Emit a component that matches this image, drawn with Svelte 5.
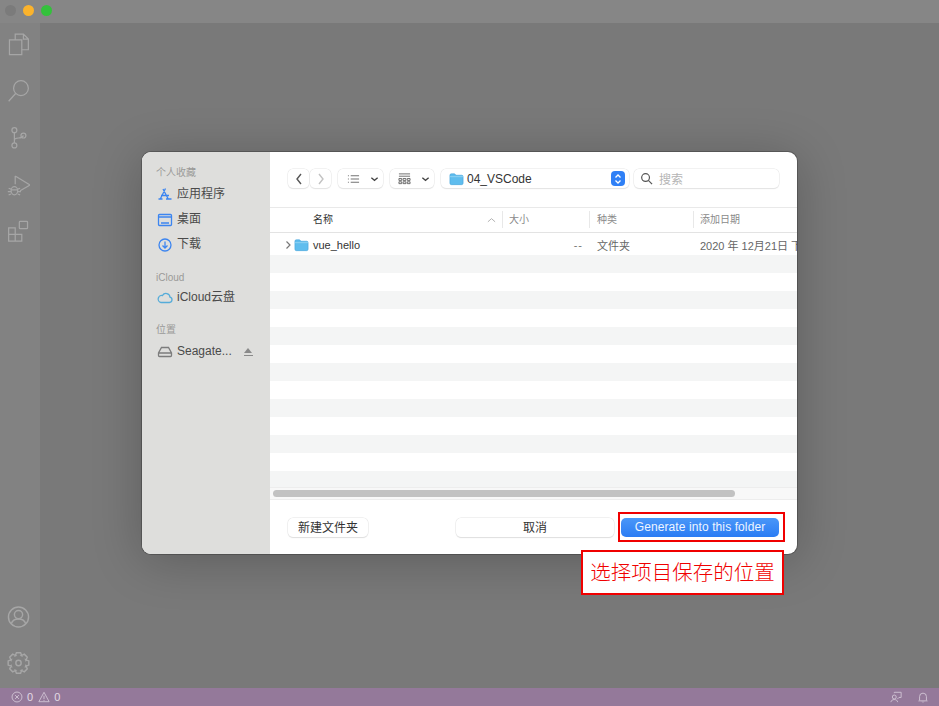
<script lang="ts">
	const stripes = Array.from({ length: 13 }, (_, i) => i);

	// eight toothed gear outline, centred on 12,12
	function gearPath(): string {
		const points: string[] = [];
		for (let i = 0; i < 8; i++) {
			const a = (i * Math.PI) / 4 - Math.PI / 2;
			for (const [r, d] of [[8.2, -0.42], [11, -0.2], [11, 0.2], [8.2, 0.42]]) {
				const x = 12 + r * Math.cos(a + d);
				const y = 12 + r * Math.sin(a + d);
				points.push(`${x.toFixed(2)} ${y.toFixed(2)}`);
			}
		}
		return `M${points.join('L')}z`;
	}
	const gear = gearPath();
</script>

<div class="window">
	<header class="titlebar">
		<span class="light gray"></span>
		<span class="light yellow"></span>
		<span class="light green"></span>
	</header>

	<div class="body">
		<nav class="activity">
			<div class="group">
				<svg viewBox="0 0 28 28" class="act"><path d="M10 9V2h10l6 6v13h-8M20 2v6h6M3 9h15v18H3z" /></svg>
				<svg viewBox="0 0 28 28" class="act"><circle cx="17" cy="10.500" r="9" /><path d="M10.500 17 2 26.500" /></svg>
				<svg viewBox="0 0 28 28" class="act"><circle cx="9" cy="4.500" r="3" /><circle cx="9" cy="23" r="3" /><circle cx="20" cy="11" r="3" /><path d="M9 7.500V20M9 17c0-2.500 2-3 5-3s5-.5 6-3" /></svg>
				<svg viewBox="0 0 28 28" class="act"><path d="M10 3v10M10 3l18 11-12 7" /><ellipse cx="9" cy="21" rx="4" ry="5" /><path d="M2 18l3 1M2 26l3-1M16 18l-3 1M16 26l-3-1M1 22h4M13 22h4M5 20h8" /></svg>
				<svg viewBox="0 0 28 28" class="act"><path d="M2 9h8v16H2zM2 17h16v8H10M10 9v8h8M18 25v-8" /><rect x="15" y="1" width="10" height="9" rx="1" /></svg>
			</div>
			<div class="group bottom">
				<svg viewBox="0 0 24 24" class="act"><circle cx="12" cy="12" r="10.500" /><circle cx="12" cy="9.500" r="4.300" /><path d="M4.500 19c1-3.500 4-5 7.500-5s6.500 1.500 7.500 5" /></svg>
				<svg viewBox="0 0 24 24" class="act"><circle cx="12" cy="12" r="2.800" /><path d={gear} /></svg>
			</div>
		</nav>
		<main class="editor"></main>
	</div>

	<footer class="status">
		<div class="status-left">
			<svg viewBox="0 0 14 14" class="st"><circle cx="7" cy="7" r="5.800" /><path d="M4.800 4.800l4.400 4.400M9.200 4.800 4.800 9.200" /></svg>
			<span>0</span>
			<svg viewBox="0 0 14 14" class="st warn"><path d="M7 1.500 13 12.500H1zM7 5.500v4M7 10.500v1" /></svg>
			<span>0</span>
		</div>
		<div class="status-right">
			<svg viewBox="0 0 14 14" class="st"><circle cx="5" cy="7" r="2.300" /><path d="M1 13c.5-2.200 2-3 4-3s3.500.8 4 3M5 2.500V1.500h8v6h-2.500l-2 2" /></svg>
			<svg viewBox="0 0 14 14" class="st"><path d="M3 10.500V6.500a4 4 0 0 1 8 0v4l1 1H2zM6 12.500c.3.700 1.700.700 2 0" /></svg>
		</div>
	</footer>

	<section class="dialog">
		<aside class="sidebar">
			<h5>个人收藏</h5>
			<div class="side-item top">
				<svg viewBox="0 0 16 16" class="side-ico blue"><path d="M8.500 1.500 3 12.500M6 2l5.500 10.500M1.500 12h4M9 12h5.500M4 8.500h8" /></svg>
				<span>应用程序</span>
			</div>
			<div class="side-item">
				<svg viewBox="0 0 16 16" class="side-ico blue"><rect x="1.500" y="2.500" width="13" height="11" rx="1" /><path d="M1.500 5h13M4 11h8" /></svg>
				<span>桌面</span>
			</div>
			<div class="side-item">
				<svg viewBox="0 0 16 16" class="side-ico blue"><circle cx="8" cy="8" r="6" /><path d="M8 4.500v6.500M5.500 8.500 8 11l2.500-2.500" /></svg>
				<span>下载</span>
			</div>
			<h5 class="gap">iCloud</h5>
			<div class="side-item cloud">
				<svg viewBox="0 0 16 16" class="side-ico sky"><path d="M4 12.500h8.500a2.700 2.700 0 0 0 .5-5.300A4 4 0 0 0 5.500 5.500 3.500 3.500 0 0 0 4 12.500z" /></svg>
				<span>iCloud云盘</span>
			</div>
			<h5 class="place">位置</h5>
			<div class="side-item last">
				<svg viewBox="0 0 16 16" class="side-ico grey"><path d="M4.500 3.500h7l3 5.500v2.500a1 1 0 0 1-1 1h-11a1 1 0 0 1-1-1V9zM1.500 9h13" /></svg>
				<span>Seagate...</span>
				<span class="eject"></span>
			</div>
		</aside>

		<div class="panel">
			<div class="toolbar">
				<div class="nav-pair">
					<button class="tb nav" aria-label="back"><svg viewBox="0 0 10 14" class="chev"><path d="M7 2 3 7l4 5" /></svg></button>
					<button class="tb nav" aria-label="forward"><svg viewBox="0 0 10 14" class="chev dim"><path d="M3 2l4 5-4 5" /></svg></button>
				</div>
				<button class="tb view" aria-label="list view">
					<svg viewBox="0 0 14 10" class="view-ico"><path d="M1 1.500h1M1 5h1M1 8.500h1M4 1.500h9M4 5h9M4 8.500h9" /></svg>
					<svg viewBox="0 0 10 6" class="caret"><path d="M1.500 1.500 5 4.500l3.500-3" /></svg>
				</button>
				<button class="tb view grid" aria-label="gallery view">
					<svg viewBox="0 0 14 12" class="view-ico tall"><path d="M1 .5h12M1 5.500h3v2H1zM5.500 5.500h3v2h-3zM10 5.500h3v2h-3zM1 9h3v2H1zM5.500 9h3v2h-3zM10 9h3v2h-3zM1 3h12" /></svg>
					<svg viewBox="0 0 10 6" class="caret"><path d="M1.500 1.500 5 4.500l3.500-3" /></svg>
				</button>
				<div class="tb path">
					<svg viewBox="0 0 16 14" class="folder"><path d="M1 3a1.500 1.500 0 0 1 1.500-1.500h3.500l1.500 1.500h6A1.500 1.500 0 0 1 15 4.500v7a1.500 1.500 0 0 1-1.500 1.500h-11A1.500 1.500 0 0 1 1 11.500z" /><path class="tab" d="M1 4.500h14" /></svg>
					<span class="path-name">04_VSCode</span>
					<span class="stepper">
						<svg viewBox="0 0 10 14"><path d="M2.500 5.500 5 3l2.500 2.500M2.500 8.500 5 11l2.500-2.500" /></svg>
					</span>
				</div>
				<div class="tb search">
					<svg viewBox="0 0 14 14" class="glass"><circle cx="6" cy="6" r="4.200" /><path d="m9 9 4 4" /></svg>
					<span>搜索</span>
				</div>
			</div>

			<div class="columns">
				<div class="col name">名称<svg viewBox="0 0 10 6" class="sort"><path d="M1 5 5 1.500 9 5" /></svg></div>
				<div class="col size">大小</div>
				<div class="col kind">种类</div>
				<div class="col date">添加日期</div>
			</div>

			<div class="rows">
				<div class="row first">
					<svg viewBox="0 0 6 10" class="disclose"><path d="M1.500 1.500 5 5 1.500 8.500" /></svg>
					<svg viewBox="0 0 16 14" class="folder"><path d="M1 3a1.500 1.500 0 0 1 1.500-1.500h3.500l1.500 1.500h6A1.500 1.500 0 0 1 15 4.500v7a1.500 1.500 0 0 1-1.500 1.500h-11A1.500 1.500 0 0 1 1 11.500z" /><path class="tab" d="M1 4.500h14" /></svg>
					<span class="file-name">vue_hello</span>
					<span class="file-size">--</span>
					<span class="file-kind">文件夹</span>
					<span class="file-date">2020 年 12月21日 下午</span>
				</div>
				{#each stripes as i}
					<div class="row" class:odd={i % 2 === 0}></div>
				{/each}
			</div>

			<div class="scroll"><div class="thumb"></div></div>

			<div class="actions">
				<button class="btn">新建文件夹</button>
				<div class="right">
					<button class="btn cancel">取消</button>
					<button class="btn primary">Generate into this folder</button>
				</div>
			</div>
		</div>
	</section>

	<div class="mark-btn"></div>
	<div class="note">选择项目保存的位置</div>
</div>

<style>
	:global(body) {
		margin: 0;
	}

	.window {
		position: relative;
		width: 939px;
		height: 706px;
		overflow: hidden;
		display: flex;
		flex-direction: column;
		background: #7a7a7a;
		font-family: "Liberation Sans", "Noto Sans CJK SC", sans-serif;
	}

	.titlebar {
		height: 23px;
		flex: none;
		display: flex;
		align-items: center;
		gap: 7px;
		padding-left: 4.500px;
		background: #868686;
	}

	.light {
		width: 11px;
		height: 11px;
		border-radius: 50%;
		margin-top: -2px;
	}

	.gray {
		background: #7b7b7b;
	}

	.yellow {
		background: #fbb32c;
	}

	.green {
		background: #33c13b;
	}

	.body {
		flex: 1;
		display: flex;
		min-height: 0;
	}

	.activity {
		width: 40px;
		flex: none;
		box-sizing: border-box;
		padding-right: 3px;
		display: flex;
		flex-direction: column;
		justify-content: space-between;
		background: #828282;
	}

	.group {
		display: flex;
		flex-direction: column;
		align-items: center;
		gap: 19px;
		padding-top: 7px;
	}

	.group.bottom {
		padding: 0 0 11px;
		gap: 18px;
	}

	.act {
		width: 23px;
		height: 28px;
		fill: none;
		stroke: #a6a6a6;
		stroke-width: 1.500;
	}

	.editor {
		flex: 1;
		background: #797979;
	}

	.status {
		height: 18px;
		flex: none;
		display: flex;
		justify-content: space-between;
		align-items: center;
		padding: 0 10px 0 11px;
		background: #94799a;
		color: #e2d9e4;
		font-size: 11px;
	}

	.status-left,
	.status-right {
		display: flex;
		align-items: center;
		gap: 4px;
	}

	.status-right {
		gap: 15px;
	}

	.st {
		width: 12px;
		height: 12px;
		fill: none;
		stroke: #d5c9d8;
		stroke-width: 1;
	}

	.status-left span {
		margin-right: 1px;
	}

	.dialog {
		position: absolute;
		left: 142px;
		top: 152px;
		width: 655px;
		height: 402px;
		display: flex;
		overflow: hidden;
		border-radius: 9px;
		background: #fff;
		box-shadow: 0 0 0 1px rgba(0, 0, 0, 0.22), 0 6px 50px rgba(0, 0, 0, 0.24);
	}

	.sidebar {
		width: 128px;
		flex: none;
		padding: 14px 0 0 14px;
		box-sizing: border-box;
		background: #dededc;
		color: #4a4a4a;
		font-size: 12px;
	}

	h5 {
		margin: 0;
		height: 13px;
		line-height: 13px;
		font-size: 10px;
		font-weight: 400;
		color: #9a9a98;
	}

	h5.gap {
		margin-top: 14px;
	}

	h5.place {
		margin-top: 13px;
	}

	.side-item {
		height: 25px;
		display: flex;
		align-items: center;
		gap: 4px;
		line-height: 25px;
	}

	.side-item.top {
		margin-top: 3px;
	}

	.side-item.cloud {
		margin-top: 1px;
	}

	.side-item.last {
		margin-top: 3px;
	}

	.side-ico {
		width: 16px;
		height: 16px;
		margin-left: 1px;
		fill: none;
		stroke-width: 1.300;
	}

	.blue {
		stroke: #3c85f0;
	}

	.sky {
		stroke: #55acd9;
	}

	.grey {
		stroke: #7c7c7c;
	}

	.eject {
		margin-left: 8px;
		width: 9px;
		height: 3px;
		margin-top: 5px;
		border-bottom: 1.500px solid #8a8a8a;
		position: relative;
	}

	.eject::before {
		content: "";
		position: absolute;
		left: 0.5px;
		top: -4px;
		border-left: 4px solid transparent;
		border-right: 4px solid transparent;
		border-bottom: 5px solid #8a8a8a;
	}

	.panel {
		flex: 1;
		min-width: 0;
		display: flex;
		flex-direction: column;
	}

	.toolbar {
		height: 56px;
		flex: none;
		display: flex;
		align-items: center;
		padding: 0 0 2px 18px;
		box-sizing: border-box;
		border-bottom: 1px solid #e9e9e9;
	}

	.tb {
		height: 19px;
		box-sizing: border-box;
		padding: 0;
		background: #fff;
		border: 0;
		border-radius: 5px;
		box-shadow: 0 0 0 0.5px #e6e6e6, 0 1px 1px rgba(0, 0, 0, 0.12);
		display: flex;
		align-items: center;
	}

	.nav-pair {
		display: flex;
		gap: 1px;
	}

	.nav {
		width: 21px;
		justify-content: center;
	}

	.chev {
		width: 10px;
		height: 14px;
		fill: none;
		stroke: #555;
		stroke-width: 1.400;
	}

	.chev.dim {
		stroke: #c2c2c2;
	}

	.view {
		width: 45px;
		margin-left: 7px;
		padding: 0 4px 0 9px;
		justify-content: space-between;
	}

	.grid {
		width: 44px;
		padding-left: 8px;
	}

	.view-ico {
		width: 13px;
		height: 10px;
		fill: none;
		stroke: #555;
		stroke-width: 0.900;
	}

	.view-ico.tall {
		height: 12px;
	}

	.caret {
		width: 9px;
		height: 6px;
		fill: none;
		stroke: #444;
		stroke-width: 1.400;
	}

	.path {
		width: 188px;
		margin-left: 7px;
		padding: 0 4px 0 8px;
		gap: 3px;
		font-size: 12px;
		color: #333;
	}

	.folder {
		width: 15px;
		height: 14px;
		flex: none;
		fill: #5fbdee;
		stroke: #4aa6dc;
		stroke-width: 0.700;
	}

	.folder .tab {
		stroke: #a6dcf6;
		stroke-width: 0.700;
		fill: none;
	}

	.path-name {
		flex: 1;
	}

	.stepper {
		width: 14px;
		height: 15px;
		border-radius: 4px;
		background: #2f80f6;
		display: flex;
		align-items: center;
		justify-content: center;
	}

	.stepper svg {
		width: 10px;
		height: 14px;
		fill: none;
		stroke: #fff;
		stroke-width: 1.300;
	}

	.search {
		width: 145px;
		margin-left: 5px;
		padding-left: 6px;
		gap: 6px;
		font-size: 12px;
		color: #b5b5b5;
	}

	.glass {
		width: 13px;
		height: 13px;
		fill: none;
		stroke: #555;
		stroke-width: 1.300;
	}

	.columns {
		height: 25px;
		flex: none;
		display: flex;
		align-items: center;
		box-sizing: border-box;
		padding-bottom: 1px;
		border-bottom: 1px solid #e3e3e3;
		font-size: 10px;
		color: #8a8a8a;
	}

	.col {
		height: 17px;
		line-height: 15px;
		box-sizing: border-box;
		padding-left: 6px;
		border-left: 1px solid #e8e8e8;
		display: flex;
		justify-content: space-between;
		align-items: center;
	}

	.col.name {
		width: 232px;
		padding: 0 6px 0 43px;
		border-left: 0;
		color: #333;
	}

	.col.size {
		width: 87px;
	}

	.col.kind {
		width: 104px;
		padding-left: 7px;
	}

	.col.date {
		flex: 1;
	}

	.sort {
		width: 9px;
		height: 6px;
		fill: none;
		stroke: #aaa;
		stroke-width: 1;
	}

	.rows {
		flex: 1;
		min-height: 0;
		overflow: hidden;
		display: flex;
		flex-direction: column;
	}

	.row {
		height: 18px;
		flex: none;
		background: #fff;
	}

	.row.odd {
		background: #f4f5f5;
	}

	.row.first {
		height: 22px;
		display: flex;
		align-items: center;
		padding: 2px 0 0 15px;
		box-sizing: border-box;
		font-size: 11px;
		color: #555;
		white-space: nowrap;
		overflow: hidden;
	}

	.disclose {
		width: 6px;
		height: 10px;
		flex: none;
		fill: none;
		stroke: #777;
		stroke-width: 1.200;
	}

	.row.first .folder {
		margin-left: 3px;
	}

	.file-name {
		width: 60px;
		flex: none;
		margin-left: 4px;
		color: #333;
	}

	.file-size {
		width: 210px;
		flex: none;
		text-align: right;
		box-sizing: border-box;
		letter-spacing: 1px;
		color: #777;
	}

	.file-kind {
		width: 103px;
		flex: none;
		margin-left: 14px;
		color: #666;
	}

	.file-date {
		color: #666;
	}

	.scroll {
		height: 13px;
		flex: none;
		display: flex;
		align-items: center;
		padding-left: 3px;
		border-top: 1px solid #ededed;
		border-bottom: 1px solid #ededed;
		box-sizing: border-box;
		background: #f8f8f8;
	}

	.thumb {
		width: 462px;
		height: 7px;
		border-radius: 4px;
		background: #c2c2c2;
	}

	.actions {
		height: 54px;
		flex: none;
		display: flex;
		justify-content: space-between;
		align-items: center;
		padding: 0 18px;
	}

	.right {
		display: flex;
		gap: 7px;
	}

	.btn {
		height: 19px;
		width: 80px;
		padding: 0 0 2px;
		border: 0;
		border-radius: 5px;
		background: #fff;
		box-shadow: 0 0 0 0.5px #e4e4e4, 0 1px 1px rgba(0, 0, 0, 0.14);
		font-family: inherit;
		font-size: 12px;
		color: #333;
	}

	.cancel {
		width: 158px;
	}

	.primary {
		width: 158px;
		padding: 0;
		background: linear-gradient(#4a97f8, #2a7cf4);
		box-shadow: none;
		color: #eef5ff;
		letter-spacing: 0.1px;
	}

	.mark-btn {
		position: absolute;
		left: 618px;
		top: 512px;
		width: 167px;
		height: 30px;
		box-sizing: border-box;
		border: 2px solid #f00000;
	}

	.note {
		position: absolute;
		left: 581px;
		top: 550px;
		width: 203px;
		height: 45px;
		box-sizing: border-box;
		border: 2px solid #f00000;
		background: #fff;
		color: #f00000;
		font-size: 20.500px;
		font-weight: 300;
		line-height: 42px;
		text-align: center;
	}
</style>
